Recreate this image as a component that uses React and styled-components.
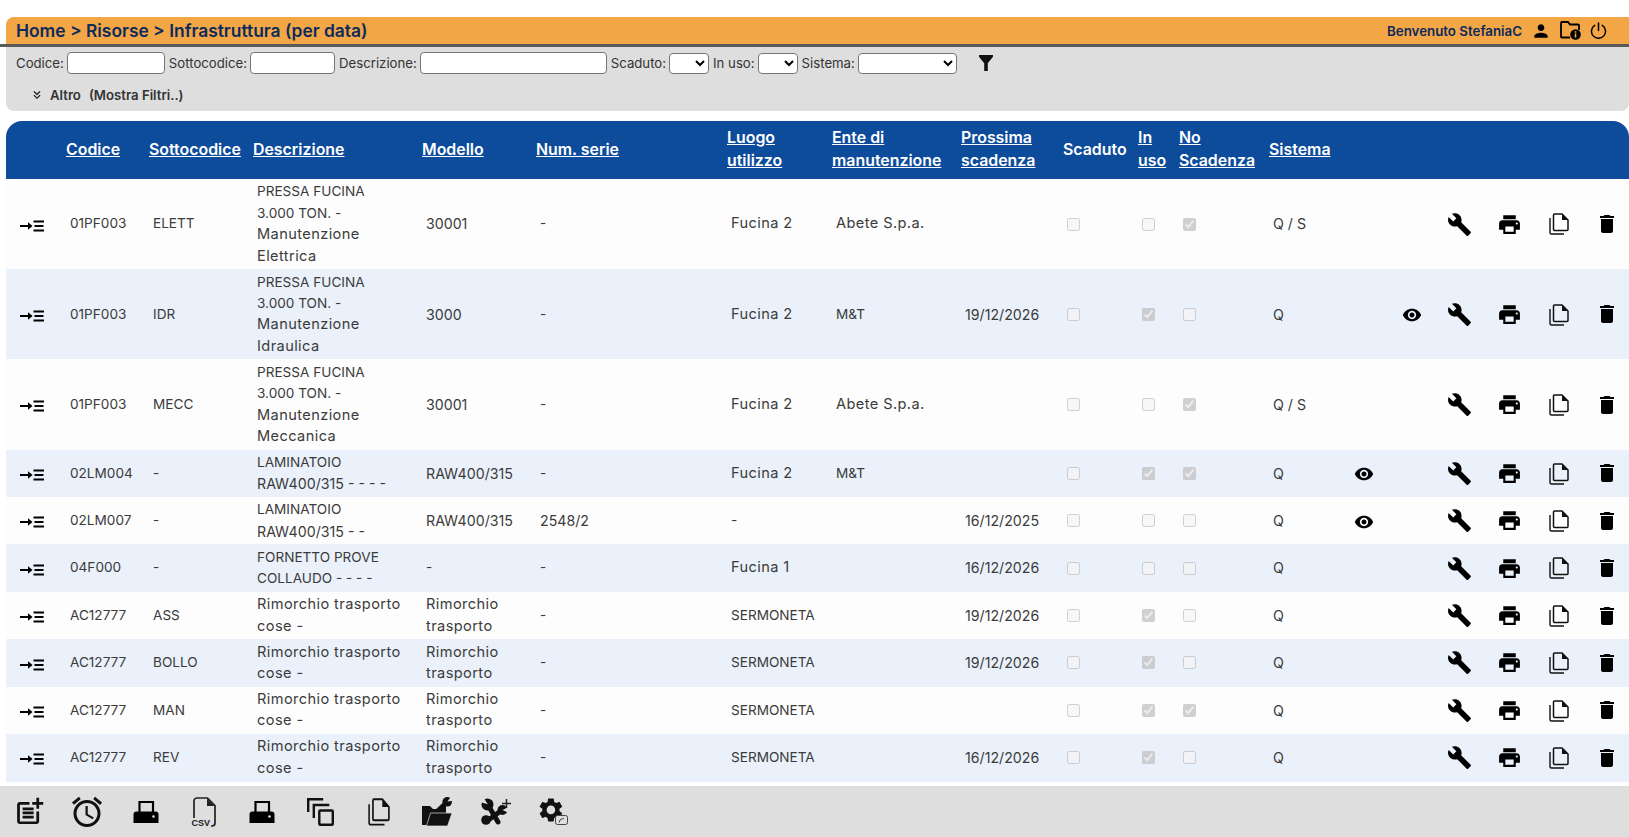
import React from 'react'
import styled, { createGlobalStyle } from 'styled-components'
import {
  MdBuild, MdPrint, MdDelete, MdVisibility, MdPerson,
  MdOutlinePostAdd, MdOutlineAccessAlarm, MdKeyboardDoubleArrowDown,
} from 'react-icons/md'

const GlobalStyle = createGlobalStyle`
  html, body { margin: 0; padding: 0; background: #fff; overflow: hidden; }
  body { font-family: Inter, "Noto Sans", sans-serif; color: #333; }
`

const Page = styled.div`
  height: 837px;
  padding-top: 17px;
  box-sizing: border-box;
  display: flex;
  flex-direction: column;
`

const TopBar = styled.div`
  height: 27px;
  margin-left: 6px;
  background: #f2a646;
  border-radius: 8px 0 0 0;
  display: flex;
  align-items: center;
  justify-content: space-between;
  padding: 0 22px 0 10px;
`

const TopRule = styled.div`
  height: 3px;
  background: #5a5a5a;
`

const Crumbs = styled.div`
  font-size: 17.4px;
  font-weight: 600;
  color: #0c2a5c;
`

const UserBox = styled.div`
  display: flex;
  align-items: center;
  gap: 9px;
  font-size: 13.3px;
  font-weight: 600;
  color: #0c2a5c;
  svg { color: #000; display: block; }
`

const FilterPanel = styled.div`
  height: 64px;
  margin-left: 6px;
  background: #dedede;
  border-radius: 0 0 8px 8px;
  padding: 5px 10px 0;
  box-sizing: border-box;
`

const FilterRow = styled.div`
  display: flex;
  align-items: center;
  gap: 3px;
  font-size: 13.2px;
  color: #333;
  height: 22px;
`

const TextInput = styled.input`
  width: ${(p) => p.$w}px;
  height: 22px;
  box-sizing: border-box;
  border: 1px solid #767676;
  border-radius: 4px;
  background: #fff;
  padding: 0;
  margin-right: 1px;
`

const Select = styled.select`
  width: ${(p) => p.$w}px;
  height: 21px;
  box-sizing: border-box;
  border: 1px solid #767676;
  border-radius: 4px;
  background: #fff;
  margin-right: 1px;
`

const FunnelSlot = styled.span`
  margin-left: 18px;
  display: flex;
`

const MoreRow = styled.div`
  display: flex;
  align-items: center;
  margin: 13px 0 0 14px;
  font-size: 13.2px;
  font-weight: 600;
  color: #333;
  svg { color: #111; margin-right: 6px; }
`

const MoreHint = styled.span`
  margin-left: 8px;
`

const TableWrap = styled.div`
  margin: 10px 0 0 6px;
  flex: 1;
  min-height: 0;
  overflow: hidden;
`

const Table = styled.table`
  width: 1623px;
  table-layout: fixed;
  border-collapse: collapse;
`

const HeadRow = styled.tr`
  background: #0d4b9b;
  height: 58px;
`

const Th = styled.th`
  padding: 0 0 2px 4px;
  text-align: left;
  font-size: 15.9px;
  font-weight: 600;
  line-height: 23px;
  color: #fff;
  white-space: nowrap;
  text-decoration: ${(p) => (p.$plain ? 'none' : 'underline')};
  &:first-child { border-top-left-radius: 16px; }
  &:last-child { border-top-right-radius: 16px; }
`

const Row = styled.tr`
  background: ${(p) => (p.$alt ? '#eaf1fa' : '#fdfdfd')};
`

const Td = styled.td`
  padding: 2.3px 0 2.3px 8px;
  color: #3b3b3b;
  vertical-align: middle;
  white-space: nowrap;
`

// the reference font runs wider on lowercase and digits than on capitals
const sizes = {
  caps: 'font-size: 13.6px;',
  digits: 'font-size: 14.2px;',
  mixed: 'font-size: 14.6px; letter-spacing: 0.4px;',
}

const Text = styled.span`
  display: block;
  line-height: 21.4px;
  ${(p) => sizes[p.$kind]}
`

const IconTd = styled.td`
  padding: 0 ${(p) => p.$pad || 0}px 0 0;
  text-align: center;
  vertical-align: middle;
  svg { display: inline-block; vertical-align: middle; color: #000; }
`

const Check = styled.input.attrs({ type: 'checkbox', disabled: true, readOnly: true })`
  margin: 0;
  width: 13px;
  height: 13px;
  display: block;
`

const BottomBar = styled.div`
  height: 51px;
  flex: none;
  background: #dedede;
  display: flex;
  align-items: center;
  svg { display: block; color: #111; }
`

const BottomSlot = styled.div`
  width: 58.3px;
  height: 36px;
  display: flex;
  align-items: center;
  justify-content: center;
`

const CsvIcon = styled.div`
  position: relative;
  width: 25px;
  height: 30px;
`

const CsvTag = styled.span`
  position: absolute;
  left: 0;
  bottom: -1px;
  padding: 0 1px 0 0;
  background: #dedede;
  font: 700 9px/10px "Liberation Sans", sans-serif;
  color: #222;
`

const RowArrow = () => (
  <svg width="24" height="12" viewBox="0 0 24 12">
    <path d="M0 5.100h8V2.300L12.600 6 8 9.700V6.900H0z" fill="#000" />
    <path d="M13.500 .6H24v1.800H13.500zM14.500 5.100H23.500v1.800h-9zM13.500 9.600H24v1.800H13.500z" fill="#000" />
  </svg>
)

const Funnel = () => (
  <svg width="14" height="16" viewBox="0 0 14 16">
    <path d="M0 0h14v1.800L8.800 8.200V16H5.200V8.200L0 1.800z" fill="#111" />
  </svg>
)

const FolderInfo = () => (
  <svg width="21" height="19" viewBox="0 0 21 19">
    <path d="M10 16.500H2a1 1 0 0 1-1-1V2a1 1 0 0 1 1-1h6l2 2.500h8a1 1 0 0 1 1 1V9" fill="none" stroke="#000" strokeWidth="1.800" />
    <circle cx="15.500" cy="13.500" r="5.300" fill="#000" />
    <path d="M14.700 12.600h1.600v4h-1.600zM14.700 10.300h1.600v1.400h-1.600z" fill="#f2a646" />
  </svg>
)

const PowerIcon = () => (
  <svg width="17" height="17" viewBox="0 0 17 17" fill="none" stroke="#000" strokeWidth="1.500" strokeLinecap="round">
    <path d="M8.500 1v7.500" />
    <path d="M4.700 3.400a7 7 0 1 0 7.600 0" />
  </svg>
)

const CopyDoc = ({ width, height }) => (
  <svg width={width} height={height} viewBox="0 0 20 22" preserveAspectRatio="none">
    <path d="M1 5v14.500A1.500 1.500 0 0 0 2.500 21H15" fill="none" stroke="#111" strokeWidth="1.400" />
    <path d="M4.500 2a1 1 0 0 1 1-1H13l6 6v9.500a1 1 0 0 1-1 1H5.500a1 1 0 0 1-1-1z" fill="none" stroke="#111" strokeWidth="1.500" />
    <path d="M13 1v6h6z" fill="#111" />
  </svg>
)

const Fax = () => (
  <svg width="26" height="22" viewBox="0 0 26 22">
    <path d="M6.500 1h13.500v11H6.500z" fill="none" stroke="#000" strokeWidth="2.200" />
    <path d="M3.500 10.500h19a3 3 0 0 1 3 3V22H.5v-8.500a3 3 0 0 1 3-3z" fill="#000" />
    <circle cx="20.500" cy="15.500" r="1.300" fill="#dedede" />
  </svg>
)

const CsvDoc = () => (
  <CsvIcon>
    <svg width="25" height="30" viewBox="0 0 25 30">
      <path d="M2 22V4a3 3 0 0 1 3-3h10.500L23 8.500V26a3 3 0 0 1-3 3h-2" fill="none" stroke="#222" strokeWidth="1.700" />
      <path d="M15 1.500V9h7.500z" fill="#222" />
    </svg>
    <CsvTag>CSV</CsvTag>
  </CsvIcon>
)

const StackSquares = () => (
  <svg width="27" height="28" viewBox="0 0 27 28" fill="none" stroke="#111" strokeWidth="2.400">
    <path d="M1.200 14V1.200h15" />
    <path d="M6.800 20V7h15.500" />
    <rect x="12.300" y="12.500" width="13.500" height="14.300" rx="1" />
  </svg>
)

const FolderWrench = () => (
  <svg width="30" height="30" viewBox="0 0 30 30">
    <path d="M0 9h8l3 3h6l7-3v19H0z" fill="#111" />
    <path d="M4.500 29l4-13H30l-4.500 13z" fill="#111" stroke="#dedede" strokeWidth=".7" />
    <path d="M16 13.500L24 6" stroke="#111" strokeWidth="4.600" />
    <circle cx="25.200" cy="4.800" r="4.800" fill="#111" />
    <path d="M25.400 4.400L29.500-1 32 4z" fill="#dedede" />
  </svg>
)

const WrenchPlus = () => (
  <svg width="30" height="27" viewBox="0 0 30 27">
    <path d="M7 7L17 24" stroke="#111" strokeWidth="5" strokeLinecap="round" />
    <path d="M6 23L21 12" stroke="#111" strokeWidth="5" />
    <circle cx="6.500" cy="6.500" r="6" fill="#111" />
    <path d="M6.700 6.200L2-1.500-1 4z" fill="#dedede" />
    <circle cx="5" cy="22" r="4.800" fill="#111" />
    <circle cx="21.500" cy="12" r="5" fill="#111" />
    <path d="M21.500 12l6-3 .5 6z" fill="#dedede" />
    <path d="M25.500 1v9M21 5.500h9" stroke="#222" strokeWidth="1.500" fill="none" />
  </svg>
)

const GearGauge = () => (
  <svg width="29" height="27" viewBox="0 0 29 27">
    <path
      transform="translate(-2.500 -2.500) scale(1.200)"
      fill="#111"
      d="M19.140 12.940c.04-.3.06-.61.06-.94 0-.32-.02-.64-.07-.94l2.030-1.580c.18-.14.23-.41.12-.61l-1.920-3.320c-.12-.22-.37-.29-.59-.22l-2.390.96c-.5-.38-1.030-.7-1.620-.94l-.36-2.540c-.04-.24-.24-.41-.48-.41h-3.840c-.24 0-.43.17-.47.41l-.36 2.540c-.59.24-1.130.57-1.620.94l-2.390-.96c-.22-.08-.47 0-.59.22L2.740 8.870c-.12.21-.08.47.12.61l2.030 1.580c-.05.3-.09.63-.09.94s.02.64.07.94l-2.030 1.580c-.18.14-.23.41-.12.61l1.920 3.320c.12.22.37.29.59.22l2.390-.96c.5.38 1.030.7 1.620.94l.36 2.540c.05.24.24.41.48.41h3.840c.24 0 .44-.17.47-.41l.36-2.540c.59-.24 1.130-.56 1.620-.94l2.390.96c.22.08.47 0 .59-.22l1.920-3.320c.12-.22.07-.47-.12-.61l-2.010-1.580zM12 15.600c-1.980 0-3.600-1.620-3.600-3.600s1.620-3.600 3.600-3.600 3.600 1.620 3.600 3.600-1.620 3.600-3.600 3.600z"
    />
    <rect x="16.500" y="17.500" width="12" height="9" rx="2" fill="#dedede" stroke="#444" strokeWidth="1" />
    <path d="M20 24.500l1-2.500 4-2" stroke="#444" strokeWidth="1" fill="none" />
  </svg>
)

const columns = [
  { w: 56 }, { w: 83, label: ['Codice'] }, { w: 104, label: ['Sottocodice'] }, { w: 169, label: ['Descrizione'] },
  { w: 114, label: ['Modello'] }, { w: 191, label: ['Num. serie'] }, { w: 105, label: ['Luogo', 'utilizzo'] },
  { w: 129, label: ['Ente di', 'manutenzione'] }, { w: 102, label: ['Prossima', 'scadenza'] },
  { w: 75, label: ['Scaduto'], plain: true }, { w: 41, label: ['In', 'uso'] }, { w: 90, label: ['No', 'Scadenza'] },
  { w: 75, label: ['Sistema'] }, { w: 48 }, { w: 47 }, { w: 49 }, { w: 50 }, { w: 50 }, { w: 45 },
]

const press = (kind) => ['PRESSA FUCINA', '3.000 TON. -', 'Manutenzione', kind]
const trailer = ['Rimorchio trasporto', 'cose -']
const trailerModel = ['Rimorchio', 'trasporto']

const rows = [
  { code: '01PF003', sub: 'ELETT', desc: press('Elettrica'), model: ['30001'], serial: '-', place: 'Fucina 2', ente: 'Abete S.p.a.', date: '', checks: [0, 0, 1], sys: 'Q / S' },
  { code: '01PF003', sub: 'IDR', desc: press('Idraulica'), model: ['3000'], serial: '-', place: 'Fucina 2', ente: 'M&T', date: '19/12/2026', checks: [0, 1, 0], sys: 'Q', eyeB: true },
  { code: '01PF003', sub: 'MECC', desc: press('Meccanica'), model: ['30001'], serial: '-', place: 'Fucina 2', ente: 'Abete S.p.a.', date: '', checks: [0, 0, 1], sys: 'Q / S' },
  { code: '02LM004', sub: '-', desc: ['LAMINATOIO', 'RAW400/315 - - - -'], model: ['RAW400/315'], serial: '-', place: 'Fucina 2', ente: 'M&T', date: '', checks: [0, 1, 1], sys: 'Q', eyeA: true },
  { code: '02LM007', sub: '-', desc: ['LAMINATOIO', 'RAW400/315 - -'], model: ['RAW400/315'], serial: '2548/2', place: '-', ente: '', date: '16/12/2025', checks: [0, 0, 0], sys: 'Q', eyeA: true },
  { code: '04F000', sub: '-', desc: ['FORNETTO PROVE', 'COLLAUDO - - - -'], model: ['-'], serial: '-', place: 'Fucina 1', ente: '', date: '16/12/2026', checks: [0, 0, 0], sys: 'Q' },
  { code: 'AC12777', sub: 'ASS', desc: trailer, model: trailerModel, serial: '-', place: 'SERMONETA', ente: '', date: '19/12/2026', checks: [0, 1, 0], sys: 'Q' },
  { code: 'AC12777', sub: 'BOLLO', desc: trailer, model: trailerModel, serial: '-', place: 'SERMONETA', ente: '', date: '19/12/2026', checks: [0, 1, 0], sys: 'Q' },
  { code: 'AC12777', sub: 'MAN', desc: trailer, model: trailerModel, serial: '-', place: 'SERMONETA', ente: '', date: '', checks: [0, 1, 1], sys: 'Q' },
  { code: 'AC12777', sub: 'REV', desc: trailer, model: trailerModel, serial: '-', place: 'SERMONETA', ente: '', date: '16/12/2026', checks: [0, 1, 0], sys: 'Q' },
]

const kindOf = (t) => {
  if (/[a-z]/.test(t)) return 'mixed'
  if (/^[\d/]+$/.test(t) || t.startsWith('RAW')) return 'digits'
  return 'caps'
}

const Cell = ({ lines }) => (
  <Td>
    {lines.map((t, i) => <Text key={i} $kind={kindOf(t)}>{t}</Text>)}
  </Td>
)

const Lines = ({ items }) => items.map((t, i) => (
  <React.Fragment key={i}>{i > 0 && <br />}{t}</React.Fragment>
))

const App = () => {
  return (
    <>
      <GlobalStyle />
      <Page>
        <TopBar>
          <Crumbs>Home &gt; Risorse &gt; Infrastruttura (per data)</Crumbs>
          <UserBox>
            Benvenuto StefaniaC
            <MdPerson size={20} />
            <FolderInfo />
            <PowerIcon />
          </UserBox>
        </TopBar>
        <TopRule />
        <FilterPanel>
          <FilterRow>
            Codice: <TextInput $w={98} />
            Sottocodice: <TextInput $w={85} />
            Descrizione: <TextInput $w={187} />
            Scaduto: <Select $w={40} />
            In uso: <Select $w={40} />
            Sistema: <Select $w={99} />
            <FunnelSlot><Funnel /></FunnelSlot>
          </FilterRow>
          <MoreRow>
            <MdKeyboardDoubleArrowDown size={14} />
            Altro
            <MoreHint>(Mostra Filtri..)</MoreHint>
          </MoreRow>
        </FilterPanel>
        <TableWrap>
          <Table>
            <colgroup>
              {columns.map((c, i) => <col key={i} style={{ width: c.w }} />)}
            </colgroup>
            <thead>
              <HeadRow>
                {columns.map((c, i) => (
                  <Th key={i} $plain={c.plain || !c.label}>
                    {c.label && <Lines items={c.label} />}
                  </Th>
                ))}
              </HeadRow>
            </thead>
            <tbody>
              {rows.map((r, i) => (
                <Row key={i} $alt={i % 2 === 1}>
                  <IconTd $pad={4}><RowArrow /></IconTd>
                  <Cell lines={[r.code]} />
                  <Cell lines={[r.sub]} />
                  <Cell lines={r.desc} />
                  <Cell lines={r.model} />
                  <Cell lines={[r.serial]} />
                  <Cell lines={[r.place]} />
                  <Cell lines={[r.ente]} />
                  <Cell lines={[r.date]} />
                  {r.checks.map((c, j) => (
                    <Td key={j}><Check checked={!!c} /></Td>
                  ))}
                  <Td><Text $kind="digits">{r.sys}</Text></Td>
                  <IconTd>{r.eyeA && <MdVisibility size={20} />}</IconTd>
                  <IconTd>{r.eyeB && <MdVisibility size={20} />}</IconTd>
                  <IconTd><MdBuild size={25} /></IconTd>
                  <IconTd><MdPrint size={25} /></IconTd>
                  <IconTd><CopyDoc width={20} height={22} /></IconTd>
                  <IconTd><MdDelete size={24} /></IconTd>
                </Row>
              ))}
            </tbody>
          </Table>
        </TableWrap>
        <BottomBar>
          <BottomSlot><MdOutlinePostAdd size={33} /></BottomSlot>
          <BottomSlot><MdOutlineAccessAlarm size={36} /></BottomSlot>
          <BottomSlot><Fax /></BottomSlot>
          <BottomSlot><CsvDoc /></BottomSlot>
          <BottomSlot><Fax /></BottomSlot>
          <BottomSlot><StackSquares /></BottomSlot>
          <BottomSlot><CopyDoc width={22} height={28} /></BottomSlot>
          <BottomSlot><FolderWrench /></BottomSlot>
          <BottomSlot><WrenchPlus /></BottomSlot>
          <BottomSlot><GearGauge /></BottomSlot>
        </BottomBar>
      </Page>
    </>
  )
}

export default App
